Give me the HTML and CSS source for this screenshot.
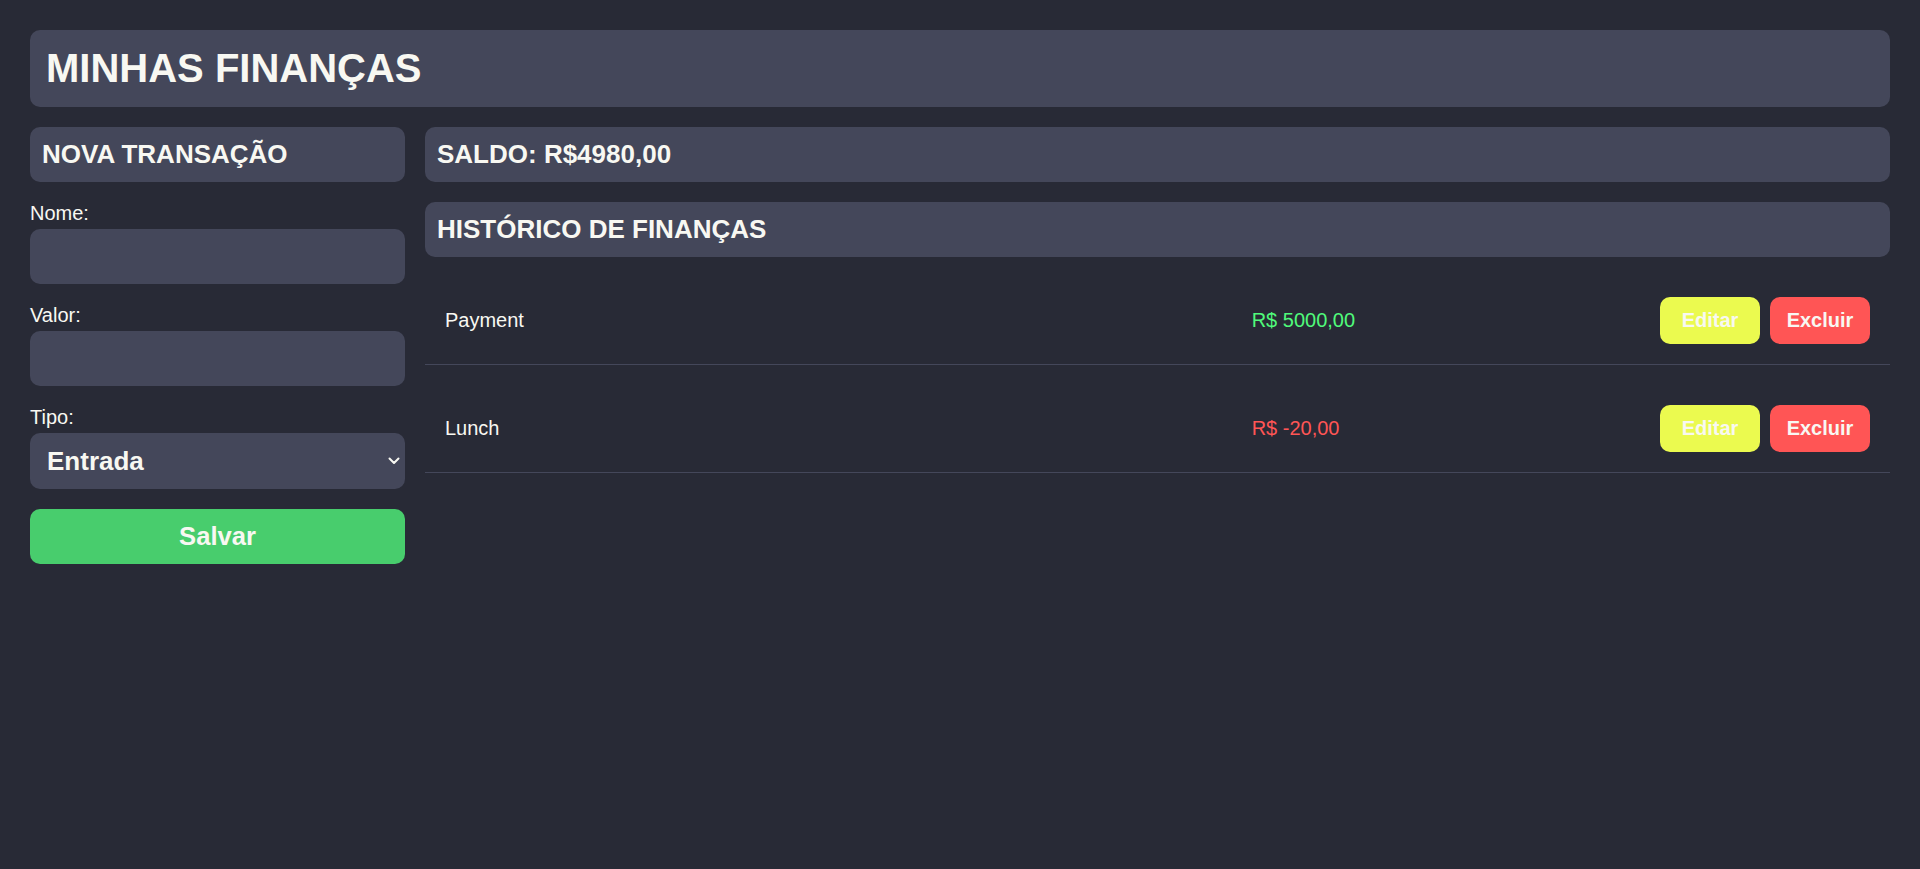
FILE: index.html
```html
<!DOCTYPE html>
<html lang="pt-BR">
<head>
<meta charset="utf-8">
<title>Minhas Finanças</title>
<link rel="stylesheet" href="styles.css">
</head>
<body>
  <header class="topbar">
    <h1 class="title">MINHAS FINANÇAS</h1>
  </header>
  <main class="layout">
    <section class="form-col">
      <h2 class="box-title">NOVA TRANSAÇÃO</h2>
      <div class="field">
        <label class="label" for="nome">Nome:</label>
        <input class="input" id="nome" type="text">
      </div>
      <div class="field">
        <label class="label" for="valor">Valor:</label>
        <input class="input" id="valor" type="text">
      </div>
      <div class="field">
        <label class="label" for="tipo">Tipo:</label>
        <div class="select-wrap">
          <select class="select" id="tipo">
            <option>Entrada</option>
            <option>Saída</option>
          </select>
          <svg class="chevron" width="12" height="8" viewBox="0 0 12 8"><path d="M1.5 1.5 L6 6 L10.5 1.5" fill="none" stroke="#f8f8f2" stroke-width="2" stroke-linecap="round" stroke-linejoin="round"/></svg>
        </div>
      </div>
      <button class="btn-save" type="button">Salvar</button>
    </section>
    <section class="list-col">
      <h2 class="box-title">SALDO: R$4980,00</h2>
      <h2 class="box-title">HISTÓRICO DE FINANÇAS</h2>
      <ul class="list">
        <li class="row">
          <span class="row-name">Payment</span>
          <span class="row-value positive">R$ 5000,00</span>
          <span class="row-actions">
            <button class="btn btn-edit" type="button">Editar</button>
            <button class="btn btn-delete" type="button">Excluir</button>
          </span>
        </li>
        <li class="row">
          <span class="row-name">Lunch</span>
          <span class="row-value negative">R$ -20,00</span>
          <span class="row-actions">
            <button class="btn btn-edit" type="button">Editar</button>
            <button class="btn btn-delete" type="button">Excluir</button>
          </span>
        </li>
      </ul>
    </section>
  </main>
</body>
</html>
```
FILE: styles.css
```css
* { box-sizing: border-box; }

html, body {
  margin: 0;
  background: #282a36;
}

body {
  padding: 30px;
  min-height: 869px;
  font-family: "Liberation Sans", Arial, sans-serif;
  color: #f8f8f2;
}

.topbar {
  background: #44475a;
  border-radius: 10px;
  padding: 15px 16px;
}

.title {
  margin: 0;
  font-size: 40px;
  line-height: 47px;
  font-weight: 700;
}

.layout {
  display: grid;
  grid-template-columns: 375px 1fr;
  gap: 20px;
  margin-top: 20px;
  align-items: start;
}

.form-col {
  display: flex;
  flex-direction: column;
  gap: 20px;
}

.list-col {
  display: flex;
  flex-direction: column;
  gap: 20px;
}

.box-title {
  margin: 0;
  background: #44475a;
  border-radius: 10px;
  padding: 12px;
  font-size: 26px;
  line-height: 31px;
  font-weight: 700;
}

.field {
  display: flex;
  flex-direction: column;
}

.label {
  display: block;
  font-size: 20px;
  line-height: 23px;
  margin-bottom: 4px;
}

.input {
  height: 55px;
  width: 100%;
  border: none;
  border-radius: 10px;
  background: #44475a;
  color: #f8f8f2;
  font-family: inherit;
  font-size: 20px;
  padding: 0 12px;
  outline: none;
}

.select-wrap {
  position: relative;
}

.select {
  appearance: none;
  -webkit-appearance: none;
  width: 100%;
  height: 56px;
  border: none;
  border-radius: 10px;
  background: #44475a;
  color: #f8f8f2;
  font-family: inherit;
  font-size: 26px;
  font-weight: 700;
  padding: 0 16px 0 17px;
  outline: none;
}

.chevron {
  position: absolute;
  right: 5px;
  top: 24px;
  pointer-events: none;
}

.btn-save {
  height: 55px;
  border: none;
  border-radius: 10px;
  background: #48cd6d;
  color: #f8f8f2;
  font-family: inherit;
  font-size: 25.6px;
  font-weight: 700;
  cursor: pointer;
}

.list {
  list-style: none;
  margin: 0;
  padding: 0;
}

.row {
  display: grid;
  grid-template-columns: 2fr 1fr auto;
  gap: 10px;
  align-items: center;
  margin-top: 20px;
  padding: 20px;
  border-bottom: 1px solid #44475a;
  font-size: 20px;
}

.list .row:first-child {
  margin-top: 0;
}

.positive { color: #50fa7b; }
.negative { color: #ff5555; }

.row-actions {
  display: flex;
  gap: 10px;
  justify-content: flex-end;
}

.btn {
  width: 100px;
  height: 47px;
  border: none;
  border-radius: 10px;
  color: #f8f8f2;
  font-family: inherit;
  font-size: 20px;
  font-weight: 700;
  padding: 0;
  cursor: pointer;
}

.btn-edit { background: #ebfa4f; }
.btn-delete { background: #ff5555; }
```
